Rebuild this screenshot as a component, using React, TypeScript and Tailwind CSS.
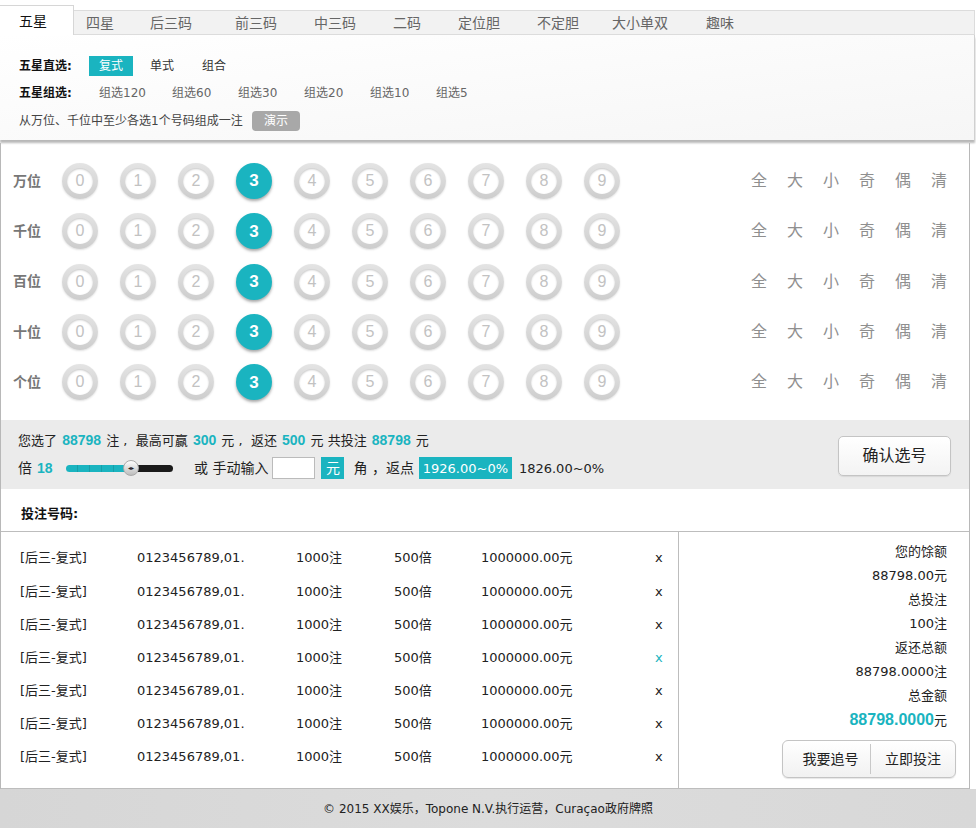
import { FC } from "react";

const tabs = [
    { name: "五星", box: "w-[74px] pl-[19px]", active: true },
    { name: "四星", box: "w-[64px] pl-[12px]", active: false },
    { name: "后三码", box: "w-[85px] pl-[12px]", active: false },
    { name: "前三码", box: "w-[79px] pl-[12px]", active: false },
    { name: "中三码", box: "w-[79px] pl-[12px]", active: false },
    { name: "二码", box: "w-[65px] pl-[12px]", active: false },
    { name: "定位胆", box: "w-[79px] pl-[12px]", active: false },
    { name: "不定胆", box: "w-[75px] pl-[12px]", active: false },
    { name: "大小单双", box: "w-[94px] pl-[12px]", active: false },
    { name: "趣味", box: "w-[60px] pl-[12px]", active: false },
];

const groups = [
    { name: "组选120", w: "w-[73px]" },
    { name: "组选60", w: "w-[66px]" },
    { name: "组选30", w: "w-[66px]" },
    { name: "组选20", w: "w-[66px]" },
    { name: "组选10", w: "w-[66px]" },
    { name: "组选5", w: "w-[66px]" },
];

const places = ["万位", "千位", "百位", "十位", "个位"];
const quick = ["全", "大", "小", "奇", "偶", "清"];

const Ball: FC<{ n: number; on: boolean }> = ({ n, on }) =>
    on ? (
        <div className="w-9 h-9 rounded-full bg-[#1ab4c0] shadow-[0_2px_3px_rgba(0,0,0,0.35)] flex items-center justify-center text-white text-[17px] font-bold font-['Liberation_Sans']">
            {n}
        </div>
    ) : (
        <div className="w-9 h-9 rounded-full bg-gradient-to-b from-[#e4e4e4] to-[#cdcdcd] p-[5px] shadow-[0_1px_2px_rgba(0,0,0,0.12)]">
            <div className="w-full h-full rounded-full bg-white shadow-[inset_0_1px_2px_rgba(0,0,0,0.22)] flex items-center justify-center text-[#c2c2c2] text-[16px] font-['Liberation_Sans']">
                {n}
            </div>
        </div>
    );

const rows = Array.from({ length: 7 }, (_, i) => i);

const Num: FC<{ v: string }> = ({ v }) => (
    <b className="mx-[1px] text-[14px] text-[#1ab4c0] font-['Liberation_Sans']">{v}</b>
);

const App: FC = () => {
    return (
        <div className="w-[976px] h-[828px] bg-white font-['DejaVu_Sans','Noto_Sans_CJK_SC',sans-serif] text-[#222] overflow-hidden">
            {/* tabs */}
            <div className="pt-[5px] w-[975px]">
                <div className="flex h-[30px] items-end">
                    {tabs.map((t) =>
                        t.active ? (
                            <div key={t.name} className={`${t.box} h-[30px] bg-white border-t border-r border-[#d6d6d6] text-[14px] leading-[30px] text-[#111]`}>
                                {t.name}
                            </div>
                        ) : null
                    )}
                    <div className="flex flex-1 h-[25px] bg-[#f2f2f2] border-t border-b border-r border-[#dcdcdc]">
                        {tabs
                            .filter((t) => !t.active)
                            .map((t) => (
                                <div key={t.name} className={`${t.box} text-[14px] leading-[24px] text-[#666]`}>
                                    {t.name}
                                </div>
                            ))}
                    </div>
                </div>
            </div>

            {/* play type panel */}
            <div className="w-[975px] h-[105px] border-r border-[#d0d0d0] bg-gradient-to-br from-white to-[#f6f6f6] shadow-[0_3px_2px_rgba(0,0,0,0.28)] pl-[19px] pt-[21px] text-[12px]">
                <div className="flex items-center h-[20px]">
                    <div className="w-[70px] font-bold text-[#111]">五星直选:</div>
                    <div className="w-[44px] h-[20px] bg-[#1ab4c0] text-white flex items-center justify-center">复式</div>
                    <div className="ml-[17px] text-[#333]">单式</div>
                    <div className="ml-[28px] text-[#333]">组合</div>
                </div>
                <div className="flex items-center h-[20px] mt-[7px]">
                    <div className="w-[80px] font-bold text-[#111]">五星组选:</div>
                    {groups.map((g) => (
                        <div key={g.name} className={`${g.w} text-[#666]`}>
                            {g.name}
                        </div>
                    ))}
                </div>
                <div className="flex items-center h-[20px] mt-[8px] text-[#444]">
                    <div className="w-[233px]">从万位、千位中至少各选1个号码组成一注</div>
                    <div className="w-[48px] h-[20px] rounded-sm bg-[#a8a8a8] text-white flex items-center justify-center">演示</div>
                </div>
            </div>

            {/* main */}
            <div className="mt-[3px] w-[970px] border-l border-r border-[#b8b8b8]">
                {/* number picker */}
                <div className="pt-[13px] pb-[13px]">
                    {places.map((p) => (
                        <div key={p} className="flex items-center h-[50.3px] pl-[12px] pr-[22px]">
                            <div className="w-[49px] text-[14px] font-bold text-[#777]">{p}</div>
                            <div className="flex gap-[22px]">
                                {Array.from({ length: 10 }, (_, i) => (
                                    <Ball key={i} n={i} on={i === 3} />
                                ))}
                            </div>
                            <div className="ml-auto flex gap-[20px] text-[16px] text-[#8f8f8f]">
                                {quick.map((q) => (
                                    <span key={q}>{q}</span>
                                ))}
                            </div>
                        </div>
                    ))}
                </div>

                {/* summary bar */}
                <div className="h-[69px] bg-[#ebebeb] flex items-start justify-between pl-[17px] pr-[18px]">
                    <div className="pt-[12px] text-[13px] text-[#222]">
                        <div className="h-[16px] leading-[16px] whitespace-pre">
                            您选了 <Num v="88798" /> 注 ,  最高可赢 <Num v="300" /> 元 ,  返还 <Num v="500" /> 元 共投注 <Num v="88798" /> 元
                        </div>
                        <div className="flex items-center mt-[9px] h-[22px] text-[14px]">
                            <span>倍</span>
                            <b className="ml-[5px] text-[#1ab4c0] font-['Liberation_Sans'] w-[29px]">18</b>
                            <div className="relative w-[107px] h-[16px] flex items-center">
                                <div className="w-[66px] h-[7px] rounded-l-full bg-[#1ab4c0] bg-[repeating-linear-gradient(90deg,transparent_0,transparent_11px,rgba(0,0,0,0.12)_11px,rgba(0,0,0,0.12)_12px)]" />
                                <div className="flex-1 h-[7px] rounded-r-full bg-[#1a1a1a]" />
                                <div className="absolute left-[57px] top-0 w-[16px] h-[16px] rounded-full bg-gradient-to-b from-white to-[#bdbdbd] border border-[#aaa] flex items-center justify-center text-[6px] leading-none text-[#222]">
                                    ◂▸
                                </div>
                            </div>
                            <span className="ml-[21px]">或 手动输入</span>
                            <div className="ml-[4px] w-[43px] h-[22px] bg-white border border-[#bbb]" />
                            <div className="ml-[6px] w-[23px] h-[22px] bg-[#1ab4c0] text-white flex items-center justify-center">元</div>
                            <span className="ml-[9px] whitespace-pre">角 ，返点</span>
                            <div className="ml-[5px] w-[93px] h-[22px] bg-[#1ab4c0] text-white text-[13px] flex items-center justify-center">1926.00~0%</div>
                            <span className="ml-[7px] text-[13px]">1826.00~0%</span>
                        </div>
                    </div>
                    <div className="mt-[16px] w-[113px] h-[40px] rounded-[5px] border border-[#c4c4c4] bg-gradient-to-b from-white to-[#f3f3f3] flex items-center justify-center text-[16px] text-[#222] shadow-[0_1px_1px_rgba(0,0,0,0.08)]">
                        确认选号
                    </div>
                </div>

                {/* list header */}
                <div className="h-[43px] pt-[6px] border-b border-[#bdbdbd] pl-[20px] flex items-center text-[13px] font-bold text-[#111]">
                    投注号码:
                </div>

                {/* list + totals */}
                <div className="flex h-[257px] border-b border-[#bdbdbd]">
                    <div className="w-[678px] border-r border-[#bdbdbd] pt-[9px] text-[13px] text-[#222]">
                        {rows.map((i) => (
                            <div key={i} className="flex items-center h-[33.2px]">
                                <div className="w-[136px] pl-[19px]">[后三-复式]</div>
                                <div className="w-[159px]">0123456789,01.</div>
                                <div className="w-[98px]">1000注</div>
                                <div className="w-[87px]">500倍</div>
                                <div className="w-[174px]">1000000.00元</div>
                                <div className={i === 3 ? "text-[#1ab4c0]" : ""}>x</div>
                            </div>
                        ))}
                    </div>
                    <div className="flex-1 flex flex-col items-end pt-[8px] pr-[22px] text-[13px] leading-[24px] text-[#222]">
                        <div>您的馀额</div>
                        <div>88798.00元</div>
                        <div>总投注</div>
                        <div>100注</div>
                        <div>返还总额</div>
                        <div>88798.0000注</div>
                        <div>总金额</div>
                        <div>
                            <b className="text-[16px] text-[#1ab4c0] font-['Liberation_Sans']">88798.0000</b>元
                        </div>
                        <div className="mt-[7px] mr-[-9px] flex w-[174px] h-[38px] rounded-[6px] border border-[#c4c4c4] bg-gradient-to-b from-white to-[#f1f1f1] text-[14px] shadow-[0_1px_1px_rgba(0,0,0,0.1)]">
                            <div className="w-[88px] flex items-center justify-center pl-[8px] border-r border-[#c8c8c8] my-[3px]">我要追号</div>
                            <div className="flex-1 flex items-center justify-center">立即投注</div>
                        </div>
                    </div>
                </div>
            </div>

            {/* footer */}
            <div className="h-[40px] bg-gradient-to-r from-[#d6d6d6] via-[#dcdcdc] to-[#d8d8d8] flex items-center justify-center text-[12px] text-[#222]">
                © 2015 XX娱乐，Topone N.V.执行运营，Curaçao政府牌照
            </div>
        </div>
    );
};

export default App;
